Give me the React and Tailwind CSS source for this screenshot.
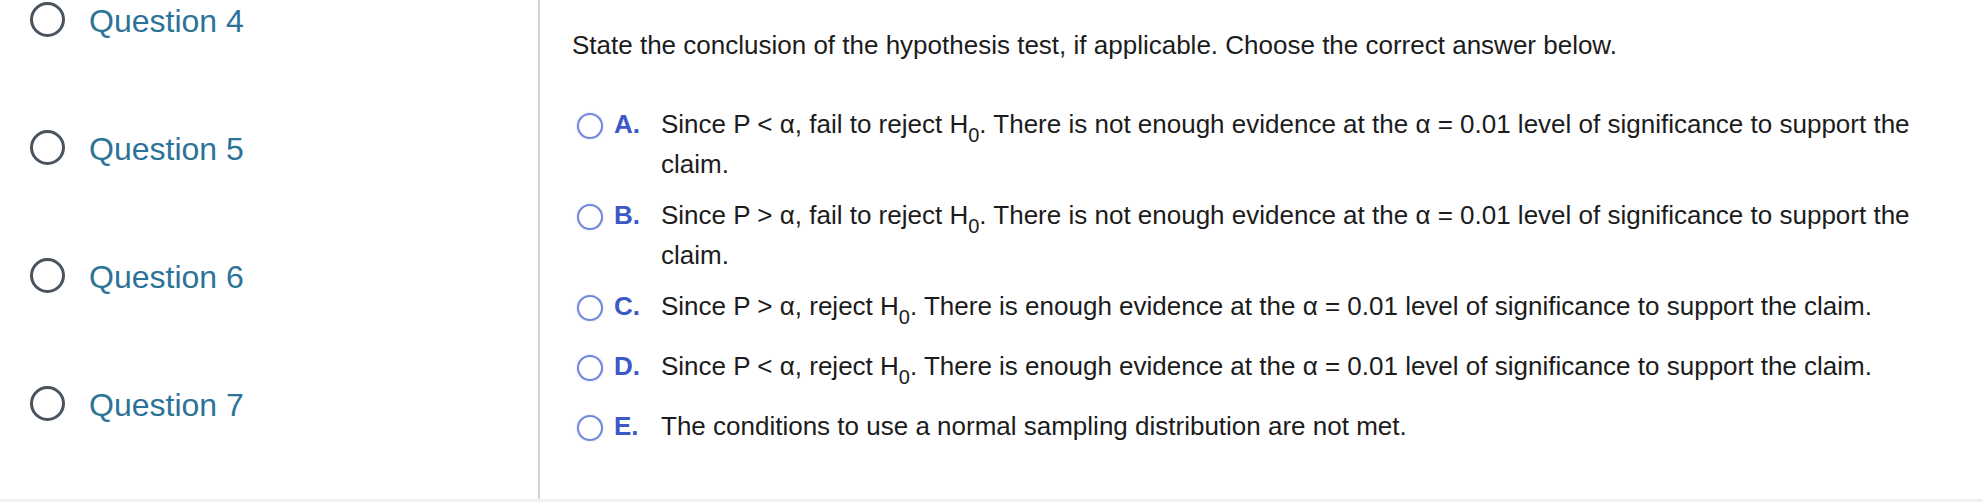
import { Fragment } from 'react'

const questions = ['Question 4', 'Question 5', 'Question 6', 'Question 7']

const options = [
  { letter: 'A.', op: '<', verdict: 'fail to reject', tail: 'There is not enough evidence at the α = 0.01 level of significance to support the claim.' },
  { letter: 'B.', op: '>', verdict: 'fail to reject', tail: 'There is not enough evidence at the α = 0.01 level of significance to support the claim.' },
  { letter: 'C.', op: '>', verdict: 'reject', tail: 'There is enough evidence at the α = 0.01 level of significance to support the claim.' },
  { letter: 'D.', op: '<', verdict: 'reject', tail: 'There is enough evidence at the α = 0.01 level of significance to support the claim.' },
  { letter: 'E.', plain: 'The conditions to use a normal sampling distribution are not met.' },
]

function OptionText({ option }) {
  if (option.plain) return <Fragment>{option.plain}</Fragment>
  return (
    <Fragment>
      Since P {option.op} α, {option.verdict} H
      <span className="text-[20px] leading-[28px] align-[-9px]">0</span>. {option.tail}
    </Fragment>
  )
}

function App() {
  return (
    <div className="w-[1982px] h-[502px] bg-white border-b-[3px] border-[#f0f0f0] flex font-['Liberation_Sans',Arial,sans-serif]">
      {/* Question list */}
      <div className="w-[540px] shrink-0 border-r-2 border-[#cfd2dc] pt-[2px] pl-[30px] flex flex-col gap-[90px]">
        {questions.map(q => (
          <div key={q} className="flex items-start gap-[24px] h-[38px]">
            <span className="w-[35px] h-[35px] rounded-full border-[3px] border-[#4a535d] shrink-0" />
            <span className="text-[32px] leading-[38px] text-[#2d7398]">{q}</span>
          </div>
        ))}
      </div>

      {/* Question body */}
      <div className="flex-1 pl-[32px] pr-[40px] pt-[30px] text-[26px] leading-[31px] text-[#1c1c1c]">
        <p>State the conclusion of the hypothesis test, if applicable. Choose the correct answer below.</p>

        <div className="mt-[48px] flex flex-col gap-[20px]">
          {options.map(option => (
            <div key={option.letter} className="flex items-start">
              <span className="ml-[5px] mt-[4px] w-[26px] h-[26px] rounded-full border-2 border-[#6f86dc] shadow-[0_0_2px_rgba(111,134,220,0.5)] shrink-0" />
              <span className="ml-[11px] w-[47px] shrink-0 font-bold text-[#3b58c6]">{option.letter}</span>
              <p className="flex-1">
                <OptionText option={option} />
              </p>
            </div>
          ))}
        </div>
      </div>
    </div>
  )
}

export default App
